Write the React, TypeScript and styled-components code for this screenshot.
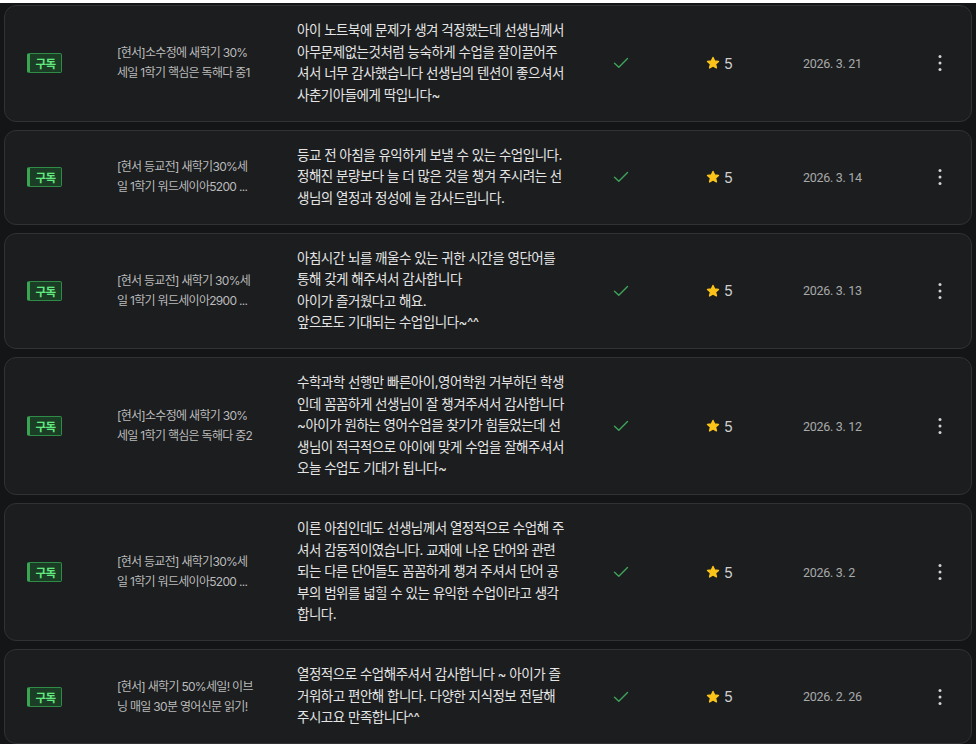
import React from "react";
import styled, { createGlobalStyle } from "styled-components";

const GlobalStyle = createGlobalStyle`
  html, body { margin: 0; padding: 0; background: #131516; }
  body { font-family: Inter, "Noto Sans CJK KR", sans-serif; }
  * { box-sizing: border-box; }
`;

type Review = {
  title: string[];
  text: string[];
  date: string;
  rating: number;
};

const reviews: Review[] = [
  {
    title: ["[현서]소수정에 새학기 30%", "세일 1학기 핵심은 독해다 중1"],
    text: [
      "아이 노트북에 문제가 생겨 걱정했는데 선생님께서",
      "아무문제없는것처럼 능숙하게 수업을 잘이끌어주",
      "셔서 너무 감사했습니다 선생님의 텐션이 좋으셔서",
      "사춘기아들에게 딱입니다~",
    ],
    date: "2026. 3. 21",
    rating: 5,
  },
  {
    title: ["[현서 등교전] 새학기30%세", "일 1학기 워드세이아5200 ..."],
    text: [
      "등교 전 아침을 유익하게 보낼 수 있는 수업입니다.",
      "정해진 분량보다 늘 더 많은 것을 챙겨 주시려는 선",
      "생님의 열정과 정성에 늘 감사드립니다.",
    ],
    date: "2026. 3. 14",
    rating: 5,
  },
  {
    title: ["[현서 등교전] 새학기 30%세", "일 1학기 워드세이아2900 ..."],
    text: [
      "아침시간 뇌를 깨울수 있는 귀한 시간을 영단어를",
      "통해 갖게 해주셔서 감사합니다",
      "아이가 즐거웠다고 해요.",
      "앞으로도 기대되는 수업입니다~^^",
    ],
    date: "2026. 3. 13",
    rating: 5,
  },
  {
    title: ["[현서]소수정에 새학기 30%", "세일 1학기 핵심은 독해다 중2"],
    text: [
      "수학과학 선행만 빠른아이,영어학원 거부하던 학생",
      "인데 꼼꼼하게 선생님이 잘 챙겨주셔서 감사합니다",
      "~아이가 원하는 영어수업을 찾기가 힘들었는데 선",
      "생님이 적극적으로 아이에 맞게 수업을 잘해주셔서",
      "오늘 수업도 기대가 됩니다~",
    ],
    date: "2026. 3. 12",
    rating: 5,
  },
  {
    title: ["[현서 등교전] 새학기30%세", "일 1학기 워드세이아5200 ..."],
    text: [
      "이른 아침인데도 선생님께서 열정적으로 수업해 주",
      "셔서 감동적이였습니다. 교재에 나온 단어와 관련",
      "되는 다른 단어들도 꼼꼼하게 챙겨 주셔서 단어 공",
      "부의 범위를 넓힐 수 있는 유익한 수업이라고 생각",
      "합니다.",
    ],
    date: "2026. 3. 2",
    rating: 5,
  },
  {
    title: ["[현서] 새학기 50%세일! 이브", "닝 매일 30분 영어신문 읽기!"],
    text: [
      "열정적으로 수업해주셔서 감사합니다 ~ 아이가 즐",
      "거워하고 편안해 합니다. 다양한 지식정보 전달해",
      "주시고요 만족합니다^^",
    ],
    date: "2026. 2. 26",
    rating: 5,
  },
];

const TopStrip = styled.div`
  height: 3px;
  background: #ffffff;
`;

const List = styled.div`
  display: flex;
  flex-direction: column;
  gap: 8px;
  padding: 2px 4px 0 4px;
`;

const Card = styled.div`
  display: grid;
  grid-template-columns: 90px 180px 316px 93px 97px 135px 1fr;
  align-items: center;
  background: #1b1d1f;
  border: 1px solid #2f3335;
  border-radius: 12px;
  padding: 14.25px 0 14.25px 22px;
`;

const Badge = styled.span`
  display: inline-flex;
  align-items: center;
  justify-content: center;
  width: 35px;
  height: 20px;
  background: #1c3d25;
  border: 1px solid #2f8c47;
  border-left: 3px solid #3aa654;
  border-radius: 2px;
  color: #62ea80;
  font-family: "Noto Sans CJK KR", sans-serif;
  font-weight: 700;
  font-size: 11.5px;
  letter-spacing: -0.5px;
  justify-self: start;
`;

const Title = styled.div`
  font-size: 12px;
  line-height: 20px;
  letter-spacing: -0.7px;
  color: #bababa;
  white-space: nowrap;
`;

const Text = styled.div`
  font-size: 13.5px;
  line-height: 21.5px;
  letter-spacing: -0.5px;
  color: #e4e4e4;
  white-space: nowrap;
`;

const Cell = styled.div`
  display: flex;
  align-items: center;
`;

const Rating = styled.div`
  display: flex;
  align-items: center;
  gap: 4px;
  font-size: 14.5px;
  color: #cfcfcf;
`;

const DateText = styled.div`
  font-family: Roboto, Inter, sans-serif;
  font-size: 12.5px;
  letter-spacing: -0.3px;
  color: #a9a9a9;
`;

const MoreButton = styled.div`
  display: flex;
  align-items: center;
  color: #d2d2d2;
`;

const Check = () => (
  <svg width="16" height="12" viewBox="0 0 16 12" fill="none">
    <path d="M1.5 6.2 L5.8 10.2 L14.5 1.5" stroke="#3fa35a" strokeWidth="1.4" strokeLinecap="round" strokeLinejoin="round" />
  </svg>
);

const Star = () => (
  <svg width="14" height="14" viewBox="0 0 24 24">
    <path
      d="M12 2.5 L14.8 8.6 L21.4 9.3 L16.4 13.8 L17.9 20.4 L12 17 L6.1 20.4 L7.6 13.8 L2.6 9.3 L9.2 8.6 Z"
      fill="#fcc419"
      stroke="#fcc419"
      strokeWidth="2.4"
      strokeLinejoin="round"
    />
  </svg>
);

const Kebab = () => (
  <svg width="4" height="18" viewBox="0 0 4 18">
    <circle cx="2" cy="2.5" r="1.5" fill="currentColor" />
    <circle cx="2" cy="9" r="1.5" fill="currentColor" />
    <circle cx="2" cy="15.5" r="1.5" fill="currentColor" />
  </svg>
);

const ReviewRow = ({ r }: { r: Review }) => (
  <Card>
    <Badge>구독</Badge>
    <Title>
      {r.title.map((l, i) => (
        <div key={i}>{l}</div>
      ))}
    </Title>
    <Text>
      {r.text.map((l, i) => (
        <div key={i}>{l}</div>
      ))}
    </Text>
    <Cell>
      <Check />
    </Cell>
    <Rating>
      <Star />
      <span>{r.rating}</span>
    </Rating>
    <DateText>{r.date}</DateText>
    <MoreButton>
      <Kebab />
    </MoreButton>
  </Card>
);

export default function App() {
  return (
    <>
      <GlobalStyle />
      <TopStrip />
      <List>
        {reviews.map((r, i) => (
          <ReviewRow key={i} r={r} />
        ))}
      </List>
    </>
  );
}
